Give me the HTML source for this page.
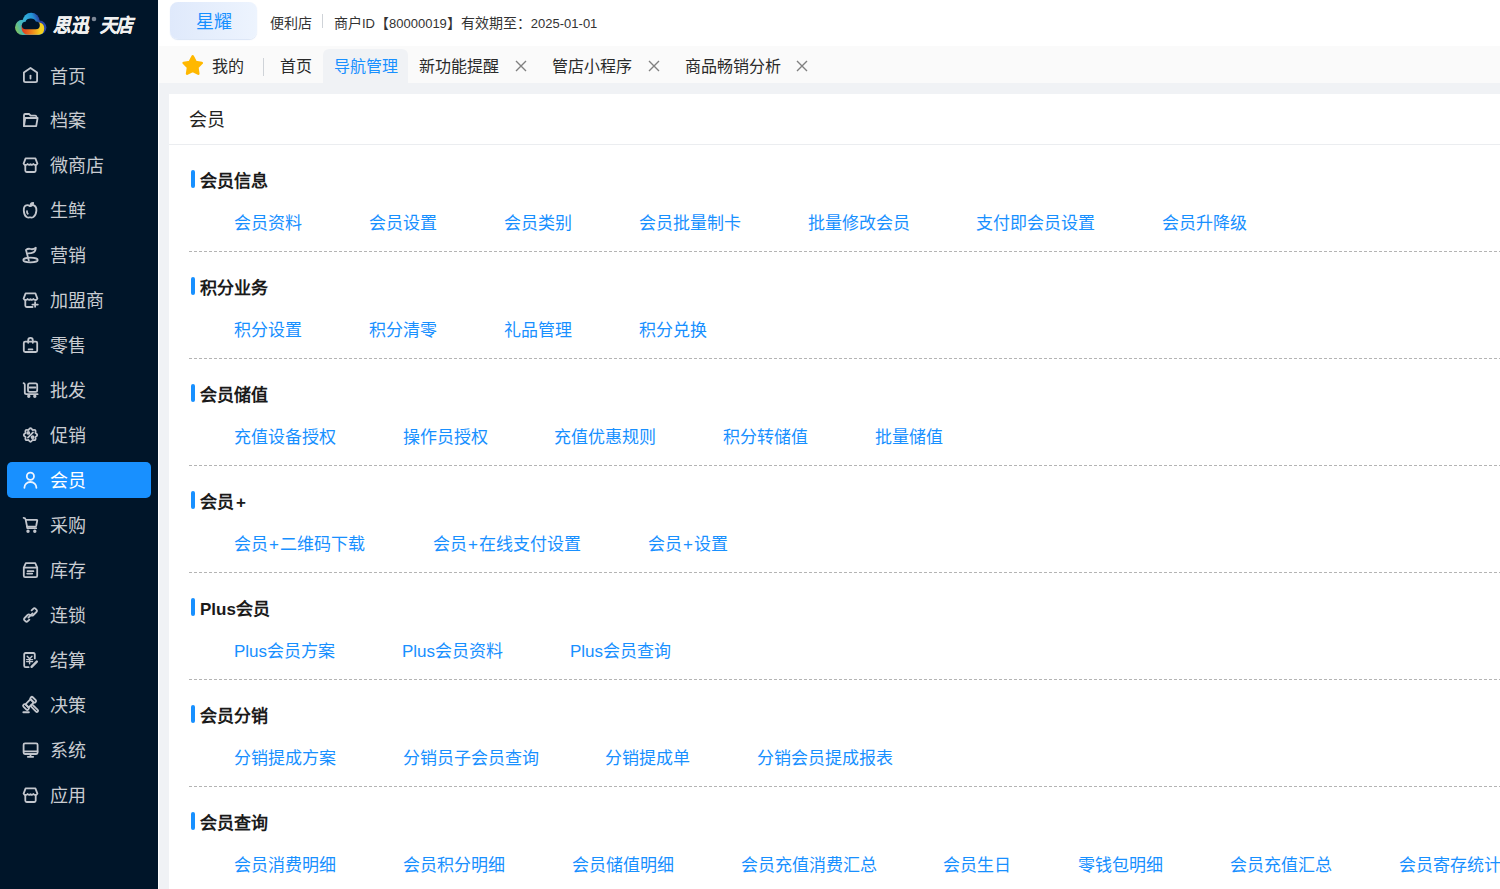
<!DOCTYPE html><html lang="zh-CN"><head><meta charset="utf-8"><style>*{margin:0;padding:0;box-sizing:border-box}
html,body{width:1500px;height:889px;overflow:hidden;background:#fff;font-family:"Liberation Sans",sans-serif}
body{position:relative}
.a{position:absolute;white-space:nowrap;line-height:1}
#side{position:absolute;left:0;top:0;width:158px;height:889px;background:#001529}
#sideline{position:absolute;left:158px;top:0;width:1px;height:889px;background:#fff}
.mi{position:absolute;left:50px;font-size:18px;color:#c9ccd1;line-height:1;white-space:nowrap}
.ic{position:absolute;left:18px;width:26px;height:26px}
.ic path,.ic rect,.ic circle,.ic ellipse{fill:none;stroke:#c3c7ce;stroke-width:1.8;stroke-linecap:round;stroke-linejoin:round}
#act{position:absolute;left:7px;top:462px;width:144px;height:36px;background:#1890ff;border-radius:5px}
#badge{position:absolute;left:170px;top:2px;width:87px;height:37px;border-radius:8px;background:linear-gradient(90deg,#dfe9fb,#edf4fe);box-shadow:0 1px 1px rgba(150,180,230,.35)}
#badge span{position:absolute;left:26px;top:11px;font-size:18px;line-height:1;color:#1890ff}
.hd{top:16px;font-size:13px;color:#333}.hd .c{font-size:14px}
.vsep{position:absolute;width:1px;background:#cfd3d8}
#tabbar{position:absolute;left:159px;top:46px;width:1341px;height:37px;background:#fafafa}
#content{position:absolute;left:159px;top:83px;width:1341px;height:806px;background:#f0f2f5}
#acttab{position:absolute;left:323px;top:49px;width:85px;height:34px;background:#f0f2f5;border-radius:6px 6px 0 0}
#panel{position:absolute;left:169px;top:94px;width:1400px;height:900px;background:#fff}
.tab{position:absolute;font-size:16px;color:#2a2a2a;line-height:1;white-space:nowrap}
.x{position:absolute;width:12px;height:12px}
.st{position:absolute;left:200px;font-size:17px;font-weight:bold;color:#1a1a1a;line-height:1;white-space:nowrap}
.bar{position:absolute;left:191px;width:4px;height:18px;background:#1890ff;border-radius:2px}
.lk{position:absolute;font-size:17px;color:#1890ff;line-height:1;white-space:nowrap}
.pl2{display:inline-block;width:12px;text-align:center}
.dash{position:absolute;left:189px;width:1311px;height:1px;background:repeating-linear-gradient(90deg,#b4b4b4 0,#b4b4b4 3px,transparent 3px,transparent 5px)}

.ic.on path,.ic.on circle{stroke:#eef4ff}
.pl{margin-left:2px}
</style></head><body>
<div id="side"></div><div id="sideline"></div>
<svg class="a" style="left:0;top:0" width="158" height="46" viewBox="0 0 158 46">
<defs>
<linearGradient id="gb" x1="15" y1="31" x2="46" y2="19" gradientUnits="userSpaceOnUse"><stop offset="0" stop-color="#86c651"/><stop offset=".22" stop-color="#4cb8b4"/><stop offset=".45" stop-color="#30acdc"/><stop offset=".65" stop-color="#2291d4"/><stop offset=".82" stop-color="#2b3d9c"/><stop offset="1" stop-color="#2456b8"/></linearGradient>
<linearGradient id="gw" x1="21" y1="0" x2="44" y2="0" gradientUnits="userSpaceOnUse"><stop offset="0" stop-color="#e0301e"/><stop offset=".5" stop-color="#f08a1c"/><stop offset=".85" stop-color="#f5d21e"/><stop offset="1" stop-color="#f0d020"/></linearGradient>
</defs>
<g>
<circle cx="22.6" cy="27.4" r="7.6" fill="url(#gb)"/>
<circle cx="31.2" cy="21.2" r="8.5" fill="url(#gb)"/>
<circle cx="39.4" cy="27.6" r="7" fill="url(#gb)"/>
<rect x="22.6" y="26" width="17" height="9" fill="url(#gb)"/>
<path d="M21.4 25.5Q21.4 34.8 28 34.8H38.5Q44.2 34.8 44.2 28.6Q44.2 22.6 38.6 22.4Z" fill="url(#gw)"/>
<path d="M25.8 29.3Q21.8 29.3 21.8 25.6Q21.8 22 25.6 21.8Q26.4 18.6 30.8 18.6Q34.8 18.6 35.8 21.6Q39.8 21.8 39.8 25.6Q39.8 29.3 35.8 29.3Z" fill="#001529"/>
</g>
<text x="53" y="31.6" font-size="19" font-weight="bold" font-style="italic" fill="#f0f0f0" stroke="#f0f0f0" stroke-width="0.4" font-family="Liberation Sans, sans-serif" textLength="35" lengthAdjust="spacingAndGlyphs">思迅</text>
<circle cx="94" cy="19" r="2.3" fill="#7d8796"/>
<text x="99.5" y="31.6" font-size="19" font-weight="bold" font-style="italic" fill="#f0f0f0" stroke="#f0f0f0" stroke-width="0.4" font-family="Liberation Sans, sans-serif" textLength="33.5" lengthAdjust="spacingAndGlyphs">天店</text>
</svg>

<div id="act"></div>
<svg class="ic" style="top:62px" viewBox="0 0 26 26"><path d="M5.9 10.6L12.5 6L19.1 10.6V18.6Q19.1 20.2 17.5 20.2H7.5Q5.9 20.2 5.9 18.6Z"/><path d="M12.5 13.6V16.6"/></svg>
<div class="mi" style="top:67.50px;color:#c9ccd1">首页</div>
<svg class="ic" style="top:107px" viewBox="0 0 26 26"><path d="M6 18.8V8.2Q6 7 7.2 7H11.2L12.6 8.6H17.4Q18.4 8.6 18.6 10.4"/><path d="M6 19.2L7.2 11H19.6L18.2 19.2Z"/></svg>
<div class="mi" style="top:112.44px;color:#c9ccd1">档案</div>
<svg class="ic" style="top:152px" viewBox="0 0 26 26"><path d="M7.6 6.4H17.4L19.4 11.6Q18.6 13 17.6 13Q16.2 13 15.4 12Q14.2 13.6 12.5 12.2Q10.8 13.6 9.6 12Q8.8 13 7.4 13Q6.4 13 5.6 11.6Z"/><path d="M7.3 13.4V18.6Q7.3 20 8.7 20H16.3Q17.7 20 17.7 18.6V13.4"/></svg>
<div class="mi" style="top:157.38px;color:#c9ccd1">微商店</div>
<svg class="ic" style="top:197px" viewBox="0 0 26 26"><path d="M12 9.2Q9.6 7.6 7.6 8.6Q5.6 9.8 5.8 13.6Q6 18.2 8.6 20Q10.4 21 12 20.2Q13.6 21 15.4 20Q18 18.2 18.4 13.6Q18.6 9.8 16.4 8.6Q14.4 7.6 12 9.2Z"/><path d="M12.4 8.6Q12.4 6 15.2 5.8Q15.2 8.4 12.8 8.8"/><path d="M9 14.2Q8.8 16 9.8 16.8"/></svg>
<div class="mi" style="top:202.32px;color:#c9ccd1">生鲜</div>
<svg class="ic" style="top:242px" viewBox="0 0 26 26"><path d="M10.8 18.6L8 8Q10 6.2 12.6 7Q15 7.8 17.8 5.8Q17.6 9.6 15.4 10.4Q13.4 11.4 10.4 11.4"/><ellipse cx="12.5" cy="18" rx="7.2" ry="2.4"/></svg>
<div class="mi" style="top:247.26px;color:#c9ccd1">营销</div>
<svg class="ic" style="top:287px" viewBox="0 0 26 26"><path d="M7.6 6.4H17.4L19.4 11.6Q18.6 13 17.6 13Q16.2 13 15.4 12Q14.2 13.6 12.5 12.2Q10.8 13.6 9.6 12Q8.8 13 7.4 13Q6.4 13 5.6 11.6Z"/><path d="M7.3 13.4V18.6Q7.3 20 8.7 20H14.6"/><path d="M14.4 17.6H19.8M17.1 15.2V19.8"/></svg>
<div class="mi" style="top:292.20px;color:#c9ccd1">加盟商</div>
<svg class="ic" style="top:332px" viewBox="0 0 26 26"><path d="M7.2 9.6H17.8Q19.2 9.6 19.2 11V18.6Q19.2 20 17.8 20H7.2Q5.8 20 5.8 18.6V11Q5.8 9.6 7.2 9.6Z"/><path d="M10.2 10.8V8.2Q10.2 5.8 12.5 5.8Q14.8 5.8 14.8 8.2V10.8"/><path d="M10.6 17.4H14.4"/></svg>
<div class="mi" style="top:337.14px;color:#c9ccd1">零售</div>
<svg class="ic" style="top:377px" viewBox="0 0 26 26"><path d="M5.6 6.2Q6.6 6.4 6.8 7.6V15.6Q6.8 17.2 8.4 17.2H19.6"/><rect x="10" y="6.4" width="9.2" height="8.4" rx="1.6"/><path d="M11.6 10.5H17.4"/><circle cx="10.8" cy="19.2" r="0.8"/><circle cx="16.8" cy="19.2" r="0.8"/></svg>
<div class="mi" style="top:382.08px;color:#c9ccd1">批发</div>
<svg class="ic" style="top:422px" viewBox="0 0 26 26"><path d="M10.47 8.10Q12.50 4.40 14.53 8.10Q18.58 6.92 17.40 10.97Q21.10 13.00 17.40 15.03Q18.58 19.08 14.53 17.90Q12.50 21.60 10.47 17.90Q6.42 19.08 7.60 15.03Q3.90 13.00 7.60 10.97Q6.42 6.92 10.47 8.10Z"/><path d="M15.0 10.4L9.9 15.6"/><circle cx="10.3" cy="10.9" r="1"/><circle cx="14.6" cy="15.2" r="1"/></svg>
<div class="mi" style="top:427.02px;color:#c9ccd1">促销</div>
<svg class="ic on" style="top:467px" viewBox="0 0 26 26"><circle cx="12.4" cy="9.3" r="3.6"/><path d="M6.4 20.8A6 5.8 0 0 1 18.4 20.8"/></svg>
<div class="mi" style="top:471.96px;color:#fff">会员</div>
<svg class="ic" style="top:512px" viewBox="0 0 26 26"><path d="M5.6 5.8Q7.2 5.8 7.6 7.4L9.4 16.2H18.2"/><path d="M8 7.8H18.6Q19.4 7.8 19.2 8.8L18.2 13.8Q18 14.6 17.2 14.6H9"/><circle cx="10" cy="19.2" r="0.8"/><circle cx="16.8" cy="19.2" r="0.8"/></svg>
<div class="mi" style="top:516.90px;color:#c9ccd1">采购</div>
<svg class="ic" style="top:557px" viewBox="0 0 26 26"><path d="M7.8 6.2H17.2L19.2 10.6V18.8Q19.2 20.2 17.8 20.2H7.2Q5.8 20.2 5.8 18.8V10.6Z"/><path d="M5.8 10.6H19.2"/><path d="M9.6 14.2H15.4M9.2 16.6H14.2"/></svg>
<div class="mi" style="top:561.84px;color:#c9ccd1">库存</div>
<svg class="ic" style="top:602px" viewBox="0 0 26 26"><path d="M13.6 8.4L15.2 6.8Q16.4 5.6 17.6 6.8L18.4 7.6Q19.6 8.8 18.4 10L15.4 13Q14.2 14.2 13 13"/><path d="M11.4 17.6L9.8 19.2Q8.6 20.4 7.4 19.2L6.6 18.4Q5.4 17.2 6.6 16L9.6 13Q10.8 11.8 12 13"/><path d="M10.4 15.6L14.6 11.4"/></svg>
<div class="mi" style="top:606.78px;color:#c9ccd1">连锁</div>
<svg class="ic" style="top:647px" viewBox="0 0 26 26"><path d="M16.8 11.4V7.4Q16.8 6 15.4 6H7.6Q6.2 6 6.2 7.4V18.8Q6.2 20.2 7.6 20.2H10.6"/><path style="stroke-width:1.4" d="M9.2 9.2L11.6 11.8L14 9.2M8.6 12.6H14.6M8.6 14.6H14.6M11.6 11.8V16.8"/><path style="stroke-width:2.4" d="M13.6 19.8L18.8 14.6"/></svg>
<div class="mi" style="top:651.72px;color:#c9ccd1">结算</div>
<svg class="ic" style="top:692px" viewBox="0 0 26 26"><g transform="translate(11.6 11.4) rotate(-45)"><rect x="-6.6" y="-3.3" width="3" height="6.6" rx="1.2"/><rect x="3.6" y="-3.3" width="3" height="6.6" rx="1.2"/><rect x="-3.6" y="-2.3" width="7.2" height="4.6"/><rect x="-1.2" y="2.3" width="2.4" height="9.2" rx="1.2"/></g><path d="M5.4 20.2H10.8" style="stroke-width:2"/></svg>
<div class="mi" style="top:696.66px;color:#c9ccd1">决策</div>
<svg class="ic" style="top:737px" viewBox="0 0 26 26"><rect x="5.6" y="6.4" width="14" height="10.6" rx="1.4"/><path d="M5.8 14.4H19.4M12.5 17V19.4M9.8 19.8H15.2"/></svg>
<div class="mi" style="top:741.60px;color:#c9ccd1">系统</div>
<svg class="ic" style="top:782px" viewBox="0 0 26 26"><path d="M7.6 6.4H17.4L19.4 11.6Q18.6 13 17.6 13Q16.2 13 15.4 12Q14.2 13.6 12.5 12.2Q10.8 13.6 9.6 12Q8.8 13 7.4 13Q6.4 13 5.6 11.6Z"/><path d="M7.3 13.4V18.6Q7.3 20 8.7 20H16.3Q17.7 20 17.7 18.6V13.4"/></svg>
<div class="mi" style="top:786.54px;color:#c9ccd1">应用</div>
<div id="badge"><span>星耀</span></div>
<div class="a hd" style="left:270px"><span class="c">便利店</span></div>
<div class="vsep" style="left:322px;top:14px;height:14px"></div>
<div class="a hd" style="left:334px"><span class="c">商户</span>ID<span class="c">【</span>80000019<span class="c">】有效期至：</span>2025-01-01</div>
<div id="tabbar"></div><div id="content"></div>
<div id="acttab"></div>
<svg class="a" style="left:181px;top:54px" width="24" height="24" viewBox="0 0 24 24"><path d="M11.70 2.40 L14.58 7.94 L20.74 8.96 L16.36 13.41 L17.28 19.59 L11.70 16.80 L6.12 19.59 L7.04 13.41 L2.66 8.96 L8.82 7.94Z" fill="#ffb800" stroke="#ffb800" stroke-width="2.6" stroke-linejoin="round"/></svg>
<div class="tab" style="left:212px;top:59px">我的</div>
<div class="vsep" style="left:263px;top:58px;height:18px"></div>
<div class="tab" style="left:280px;top:59px">首页</div>
<div class="tab" style="left:334px;top:59px;color:#1890ff">导航管理</div>
<div class="tab" style="left:419px;top:59px">新功能提醒</div>
<div class="tab" style="left:552px;top:59px">管店小程序</div>
<div class="tab" style="left:685px;top:59px">商品畅销分析</div>
<svg class="x" style="left:515px;top:60px" viewBox="0 0 12 12"><path d="M1 1L11 11M11 1L1 11" stroke="#808080" stroke-width="1.4"/></svg>
<svg class="x" style="left:648px;top:60px" viewBox="0 0 12 12"><path d="M1 1L11 11M11 1L1 11" stroke="#808080" stroke-width="1.4"/></svg>
<svg class="x" style="left:796px;top:60px" viewBox="0 0 12 12"><path d="M1 1L11 11M11 1L1 11" stroke="#808080" stroke-width="1.4"/></svg>
<div id="panel"></div>
<div class="a" style="left:189px;top:111px;font-size:18px;color:#222">会员</div>
<div style="position:absolute;left:169px;top:144px;width:1331px;height:1px;background:#ebedf0"></div>
<div class="bar" style="top:170px"></div>
<div class="st" style="top:173px">会员信息</div>
<div class="lk" style="left:234px;top:214.5px">会员资料</div>
<div class="lk" style="left:369px;top:214.5px">会员设置</div>
<div class="lk" style="left:504px;top:214.5px">会员类别</div>
<div class="lk" style="left:639px;top:214.5px">会员批量制卡</div>
<div class="lk" style="left:808px;top:214.5px">批量修改会员</div>
<div class="lk" style="left:976px;top:214.5px">支付即会员设置</div>
<div class="lk" style="left:1162px;top:214.5px">会员升降级</div>
<div class="dash" style="top:251px"></div>
<div class="bar" style="top:277px"></div>
<div class="st" style="top:280px">积分业务</div>
<div class="lk" style="left:234px;top:321.5px">积分设置</div>
<div class="lk" style="left:369px;top:321.5px">积分清零</div>
<div class="lk" style="left:504px;top:321.5px">礼品管理</div>
<div class="lk" style="left:639px;top:321.5px">积分兑换</div>
<div class="dash" style="top:358px"></div>
<div class="bar" style="top:384px"></div>
<div class="st" style="top:387px">会员储值</div>
<div class="lk" style="left:234px;top:428.5px">充值设备授权</div>
<div class="lk" style="left:403px;top:428.5px">操作员授权</div>
<div class="lk" style="left:554px;top:428.5px">充值优惠规则</div>
<div class="lk" style="left:723px;top:428.5px">积分转储值</div>
<div class="lk" style="left:875px;top:428.5px">批量储值</div>
<div class="dash" style="top:465px"></div>
<div class="bar" style="top:491px"></div>
<div class="st" style="top:494px">会员<span class="pl">+</span></div>
<div class="lk" style="left:234px;top:535.5px">会员<span class="pl2">+</span>二维码下载</div>
<div class="lk" style="left:433px;top:535.5px">会员<span class="pl2">+</span>在线支付设置</div>
<div class="lk" style="left:648px;top:535.5px">会员<span class="pl2">+</span>设置</div>
<div class="dash" style="top:572px"></div>
<div class="bar" style="top:598px"></div>
<div class="st" style="top:601px">Plus会员</div>
<div class="lk" style="left:234px;top:642.5px">Plus会员方案</div>
<div class="lk" style="left:402px;top:642.5px">Plus会员资料</div>
<div class="lk" style="left:570px;top:642.5px">Plus会员查询</div>
<div class="dash" style="top:679px"></div>
<div class="bar" style="top:705px"></div>
<div class="st" style="top:708px">会员分销</div>
<div class="lk" style="left:234px;top:749.5px">分销提成方案</div>
<div class="lk" style="left:403px;top:749.5px">分销员子会员查询</div>
<div class="lk" style="left:605px;top:749.5px">分销提成单</div>
<div class="lk" style="left:757px;top:749.5px">分销会员提成报表</div>
<div class="dash" style="top:786px"></div>
<div class="bar" style="top:812px"></div>
<div class="st" style="top:815px">会员查询</div>
<div class="lk" style="left:234px;top:856.5px">会员消费明细</div>
<div class="lk" style="left:403px;top:856.5px">会员积分明细</div>
<div class="lk" style="left:572px;top:856.5px">会员储值明细</div>
<div class="lk" style="left:741px;top:856.5px">会员充值消费汇总</div>
<div class="lk" style="left:943px;top:856.5px">会员生日</div>
<div class="lk" style="left:1078px;top:856.5px">零钱包明细</div>
<div class="lk" style="left:1230px;top:856.5px">会员充值汇总</div>
<div class="lk" style="left:1399px;top:856.5px">会员寄存统计</div>
</body></html>
